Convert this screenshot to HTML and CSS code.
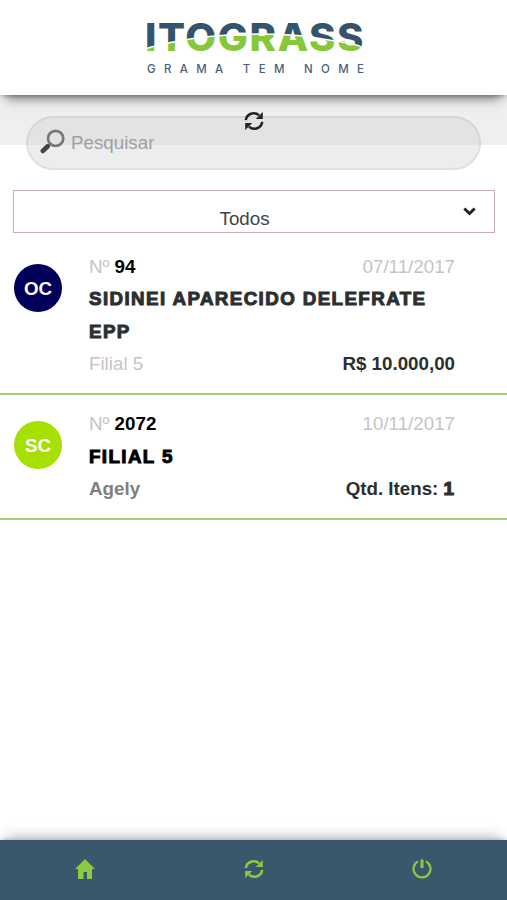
FILE: index.html
```html
<!DOCTYPE html>
<html lang="pt-BR">
<head>
    <meta charset="UTF-8">
    <meta name="viewport" content="width=device-width, initial-scale=1.0">
    <title>Itograss</title>
    <link rel="stylesheet" href="styles.css">
</head>
<body>
    <svg class="sprite" width="0" height="0">
        <symbol id="refresh" viewBox="0 0 20 20">
            <path d="M1.8 9.2A8 8 0 0 1 15 4.2M18.2 10.8A8 8 0 0 1 5 15.8" fill="none" stroke="currentColor" stroke-width="2.5"/>
            <path d="M18.8 1v7h-7zM1.2 19v-7h7z" fill="currentColor"/>
        </symbol>
    </svg>

    <header class="topo">
        <svg class="logo" viewBox="0 -12 220 72">
            <defs>
                <pattern id="grama" patternUnits="userSpaceOnUse" x="-10" width="260" height="60">
                    <rect width="260" height="60" fill="#35536b"/>
                    <path d="M4 30C30 22 70 14.5 120 14C155 13.5 175 17 195 20.5C210 23 220 24 224 27H264V64H4Z" fill="#86c83c" stroke="#fff" stroke-width="1.5"/>
                </pattern>
            </defs>
            <text class="logo-nome" x="-2" y="31" textLength="220" lengthAdjust="spacingAndGlyphs" fill="url(#grama)">ITOGRASS</text>
            <text class="logo-slogan" x="0" y="53.3" textLength="217">GRAMA TEM NOME</text>
        </svg>
    </header>

    <main class="conteudo">
        <div class="faixa">
            <svg class="atualizar"><use href="#refresh"/></svg>
            <div class="busca">
                <svg class="lupa" viewBox="0 0 24 24">
                    <circle cx="15" cy="9" r="7.3" fill="none" stroke="#777" stroke-width="2.6"/>
                    <path d="M9 15L7 17" stroke="#666" stroke-width="3"/>
                    <path d="M7.2 16.8L2.8 21" stroke="#444" stroke-width="4.6" stroke-linecap="round"/>
                </svg>
                <span>Pesquisar</span>
            </div>
        </div>

        <div class="filtro">
            <span>Todos</span>
            <svg class="seta" viewBox="0 0 13 9"><path d="M1.3 1.5L6.5 6.5L11.7 1.5" fill="none" stroke="#222" stroke-width="3"/></svg>
        </div>

        <div class="item">
            <div class="sigla oc">OC</div>
            <div class="dados">
                <div class="linha"><span>Nº <b>94</b></span><span>07/11/2017</span></div>
                <div class="nome">SIDINEI APARECIDO DELEFRATE EPP</div>
                <div class="linha"><span>Filial 5</span><span class="valor">R$ 10.000,00</span></div>
            </div>
        </div>
        <div class="item">
            <div class="sigla sc">SC</div>
            <div class="dados">
                <div class="linha"><span>Nº <b>2072</b></span><span>10/11/2017</span></div>
                <div class="nome preto">FILIAL 5</div>
                <div class="linha"><span class="usuario">Agely</span><span class="valor">Qtd. Itens: <span class="qtd">1</span></span></div>
            </div>
        </div>
    </main>

    <footer class="rodape">
        <svg viewBox="0 0 20 20"><path d="M10 0L20 10H17V20H12V13H8.5V20H3V10H0Z" fill="currentColor"/></svg>
        <svg><use href="#refresh"/></svg>
        <svg viewBox="0 0 20 20"><path d="M6 2.4A8.5 8.5 0 1 0 14 2.4" fill="none" stroke="currentColor" stroke-width="2.2"/><path d="M10 0.5V9" stroke="currentColor" stroke-width="3"/></svg>
    </footer>
</body>
</html>
```

FILE: styles.css
```css
* {
    box-sizing: border-box;
}
body {
    margin: 0;
    height: 100vh;
    display: flex;
    flex-direction: column;
    overflow: hidden;
    background-color: #fff;
    font-family: "Liberation Sans", Arial, sans-serif;
    font-size: 18.75px;
}
.sprite {
    display: none;
}
.topo {
    height: 95px;
    flex: none;
    display: flex;
    justify-content: center;
    padding-top: 8px;
    z-index: 1;
    background-color: #fff;
    box-shadow: 0 9px 11px -6px #666, 0 2px 4px -2px #777;
}
.logo {
    width: 220px;
    height: 72px;
    margin-left: 6px;
    overflow: visible;
}
.logo-nome {
    font-family: Inter, sans-serif;
    font-weight: 800;
    font-size: 38.5px;
    letter-spacing: 1.5px;
}
.logo-slogan {
    font-family: Inter, sans-serif;
    font-weight: 500;
    font-size: 11.5px;
    fill: #4b6275;
}
.conteudo {
    flex: 1;
}
.faixa {
    position: relative;
    height: 50px;
    padding: 20.5px 26px 0;
    background-color: #efefef;
}
.busca {
    height: 54px;
    display: flex;
    align-items: center;
    gap: 6px;
    padding-left: 12px;
    border: 2px solid rgba(0, 0, 0, 0.06);
    border-radius: 27px;
    background-color: rgba(205, 205, 205, 0.37);
    color: #a0a0a0;
}
.lupa {
    width: 25px;
    height: 25px;
    margin-top: -2px;
}
.atualizar {
    position: absolute;
    left: 244px;
    top: 16px;
    width: 20px;
    height: 20px;
    color: #222;
}
.filtro {
    height: 43px;
    margin: 45px 12px 4px 13px;
    padding: 14px 18px 0 205.5px;
    display: flex;
    justify-content: space-between;
    border: 1.5px solid #c9abb3;
    color: #444;
    line-height: 27px;
}
.seta {
    width: 13px;
    height: 9px;
    margin-top: 2px;
}
.item {
    display: flex;
    padding: 13.5px 52px 12px 14px;
    border-bottom: 2px solid #a3cf70;
    color: #c8c4c4;
    line-height: 32.5px;
}
.sigla {
    width: 48px;
    height: 48px;
    flex: none;
    margin: 13px 27px 0 0;
    border-radius: 50%;
    color: #fff;
    font-weight: bold;
    line-height: 49px;
    text-align: center;
}
.oc {
    background-color: #00005a;
}
.sc {
    background-color: #a6e000;
}
.dados {
    flex: 1;
}
.linha {
    display: flex;
    justify-content: space-between;
}
.linha b {
    color: #000;
}
.nome {
    color: #2c2f30;
    font-weight: bold;
    letter-spacing: 1.4px;
    -webkit-text-stroke: 1px;
}
.preto {
    color: #000;
}
.valor {
    color: #2c2f30;
    font-weight: bold;
}
.usuario {
    color: #808080;
    font-weight: bold;
}
.qtd {
    -webkit-text-stroke: 1.2px;
    letter-spacing: 1px;
}
.rodape {
    height: 60px;
    flex: none;
    display: grid;
    grid-template-columns: repeat(3, 168.5px);
    place-items: center;
    background-color: #3b576c;
    box-shadow: 0 -9px 12px -6px #bbb, 0 -2px 4px -2px #999;
    color: #8bcb42;
}
.rodape svg {
    width: 20px;
    height: 20px;
    margin: -2px 0 0 2px;
}
```
